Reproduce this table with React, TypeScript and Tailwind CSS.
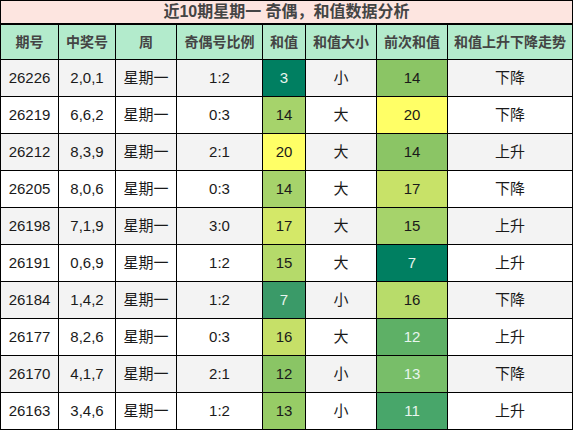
const COLS = ["期号", "中奖号", "周", "奇偶号比例", "和值", "和值大小", "前次和值", "和值上升下降走势"];

interface Row {
  issue: string;
  nums: string;
  ratio: string;
  sum: number;
  sumBg: string;
  sumLight?: boolean;
  size: string;
  prev: number;
  prevBg: string;
  prevLight?: boolean;
  trend: string;
}

const rows: Row[] = [
  { issue: "26226", nums: "2,0,1", ratio: "1:2", sum: 3, sumBg: "bg-[#007f61]", sumLight: true, size: "小", prev: 14, prevBg: "bg-[#8bc565]", trend: "下降" },
  { issue: "26219", nums: "6,6,2", ratio: "0:3", sum: 14, sumBg: "bg-[#a6d36b]", size: "大", prev: 20, prevBg: "bg-[#ffff66]", trend: "下降" },
  { issue: "26212", nums: "8,3,9", ratio: "2:1", sum: 20, sumBg: "bg-[#ffff66]", size: "大", prev: 14, prevBg: "bg-[#8bc565]", trend: "上升" },
  { issue: "26205", nums: "8,0,6", ratio: "0:3", sum: 14, sumBg: "bg-[#a6d36b]", size: "大", prev: 17, prevBg: "bg-[#c8e268]", trend: "下降" },
  { issue: "26198", nums: "7,1,9", ratio: "3:0", sum: 17, sumBg: "bg-[#d4e868]", size: "大", prev: 15, prevBg: "bg-[#a6d36b]", trend: "上升" },
  { issue: "26191", nums: "0,6,9", ratio: "1:2", sum: 15, sumBg: "bg-[#b5da6a]", size: "大", prev: 7, prevBg: "bg-[#007f61]", prevLight: true, trend: "上升" },
  { issue: "26184", nums: "1,4,2", ratio: "1:2", sum: 7, sumBg: "bg-[#3a9a68]", sumLight: true, size: "小", prev: 16, prevBg: "bg-[#b8dc6a]", trend: "下降" },
  { issue: "26177", nums: "8,2,6", ratio: "0:3", sum: 16, sumBg: "bg-[#c6e068]", size: "大", prev: 12, prevBg: "bg-[#5eb066]", prevLight: true, trend: "上升" },
  { issue: "26170", nums: "4,1,7", ratio: "2:1", sum: 12, sumBg: "bg-[#8ac565]", size: "小", prev: 13, prevBg: "bg-[#78be69]", prevLight: true, trend: "下降" },
  { issue: "26163", nums: "3,4,6", ratio: "1:2", sum: 13, sumBg: "bg-[#97cc66]", size: "小", prev: 11, prevBg: "bg-[#48a66a]", prevLight: true, trend: "上升" },
];

export default function App() {
  return (
    <div className="w-[574px] h-[432px] bg-white font-['Liberation_Sans','Noto_Sans_CJK_SC',sans-serif]">
      <div className="w-[573px] border border-black">
        {/* Title */}
        <div className="h-[24px] border-b-2 border-black bg-[#fde5e0] flex items-center justify-center text-[16px] font-bold text-[#444]">
          近10期星期一 奇偶，和值数据分析
        </div>

        {/* Table */}
        <div className="grid grid-cols-[57px_56px_60px_85px_42px_70px_70px_124px] gap-px bg-black">
          {COLS.map((c) => (
            <div
              key={c}
              className="h-[34px] bg-[#b3ebcc] flex items-center justify-center text-[14px] font-bold text-[#444]"
            >
              {c}
            </div>
          ))}
          {rows.map((r, i) => {
            const bg = i % 2 === 0 ? "bg-[#f3f3f3]" : "bg-white";
            const cell = `h-[36px] flex items-center justify-center text-[15px] text-[#1a1a1a] ${bg}`;
            return [
              <div key={`${i}a`} className={cell}>{r.issue}</div>,
              <div key={`${i}b`} className={cell}>{r.nums}</div>,
              <div key={`${i}c`} className={cell}>星期一</div>,
              <div key={`${i}d`} className={cell}>{r.ratio}</div>,
              <div
                key={`${i}e`}
                className={`h-[36px] flex items-center justify-center text-[15px] ${r.sumBg} ${r.sumLight ? "text-[#e8f5ee]" : "text-[#1a1a1a]"}`}
              >
                {r.sum}
              </div>,
              <div key={`${i}f`} className={cell}>{r.size}</div>,
              <div
                key={`${i}g`}
                className={`h-[36px] flex items-center justify-center text-[15px] ${r.prevBg} ${r.prevLight ? "text-[#e8f5ee]" : "text-[#1a1a1a]"}`}
              >
                {r.prev}
              </div>,
              <div key={`${i}h`} className={cell}>{r.trend}</div>,
            ];
          })}
        </div>
      </div>
    </div>
  );
}
